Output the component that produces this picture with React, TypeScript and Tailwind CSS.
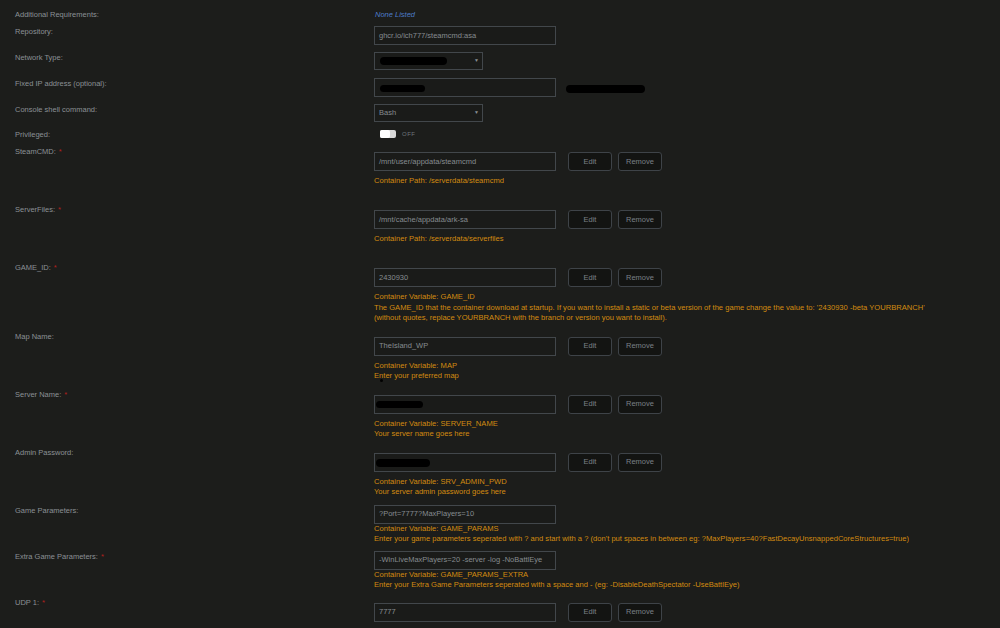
import React from "react";

type Row = {
  label: string;
  required?: boolean;
  value: React.ReactNode;
  buttons?: boolean;
  lines?: string[];
};

const font = { fontFamily: '"Liberation Sans", Arial, sans-serif' };

function Blob({ className }: { className: string }) {
  return <span className={`inline-block rounded-full bg-black ${className}`} />;
}

function TextInput({ children }: { children: React.ReactNode }) {
  return (
    <div className="flex h-[19px] w-[182px] shrink-0 items-center border border-[#42474b] bg-[#1a1b19] px-[4px] text-[7.5px] text-[#868b90]">
      {children}
    </div>
  );
}

function Select({ children }: { children: React.ReactNode }) {
  return (
    <div className="flex h-[18px] w-[109px] items-center justify-between border border-[#42474b] bg-[#1a1b19] pl-[4px] pr-[3px] text-[7.5px] text-[#868b90]">
      <span className="flex items-center">{children}</span>
      <span className="text-[5px] text-[#8a9096]">▼</span>
    </div>
  );
}

function Btn({ children }: { children: string }) {
  return (
    <button className="flex h-[19px] w-[44px] items-center justify-center rounded-[3px] border border-[#3e4348] bg-[#131412] text-[7.5px] text-[#7a8086]">
      {children}
    </button>
  );
}

const rows: Row[] = [
  {
    label: "SteamCMD:",
    required: true,
    value: "/mnt/user/appdata/steamcmd",
    buttons: true,
    lines: ["Container Path: /serverdata/steamcmd", "\u00a0"],
  },
  {
    label: "ServerFiles:",
    required: true,
    value: "/mnt/cache/appdata/ark-sa",
    buttons: true,
    lines: ["Container Path: /serverdata/serverfiles", "\u00a0"],
  },
  {
    label: "GAME_ID:",
    required: true,
    value: "2430930",
    buttons: true,
    lines: [
      "Container Variable: GAME_ID",
      "The GAME_ID that the container download at startup. If you want to install a static or beta version of the game change the value to: '2430930 -beta YOURBRANCH'",
      "(without quotes, replace YOURBRANCH with the branch or version you want to install).",
    ],
  },
  {
    label: "Map Name:",
    value: "TheIsland_WP",
    buttons: true,
    lines: ["Container Variable: MAP", "Enter your preferred map"],
  },
  {
    label: "Server Name:",
    required: true,
    value: <Blob className="-ml-[3px] h-[7px] w-[47px]" />,
    buttons: true,
    lines: ["Container Variable: SERVER_NAME", "Your server name goes here"],
  },
  {
    label: "Admin Password:",
    value: <Blob className="-ml-[3px] mt-[2px] h-[8px] w-[54px]" />,
    buttons: true,
    lines: ["Container Variable: SRV_ADMIN_PWD", "Your server admin password goes here"],
  },
  {
    label: "Game Parameters:",
    value: "?Port=7777?MaxPlayers=10",
    lines: [
      "Container Variable: GAME_PARAMS",
      "Enter your game parameters seperated with ? and start with a ? (don't put spaces in between eg: ?MaxPlayers=40?FastDecayUnsnappedCoreStructures=true)",
    ],
  },
  {
    label: "Extra Game Parameters:",
    required: true,
    value: "-WinLiveMaxPlayers=20 -server -log -NoBattlEye",
    lines: [
      "Container Variable: GAME_PARAMS_EXTRA",
      "Enter your Extra Game Parameters seperated with a space and - (eg: -DisableDeathSpectator -UseBattlEye)",
    ],
  },
  {
    label: "UDP 1:",
    required: true,
    value: "7777",
    buttons: true,
  },
];

function Label({ text, required }: { text: string; required?: boolean }) {
  return (
    <div className="w-[359px] shrink-0 pl-[15px] text-[7.5px] leading-[11px] text-[#8b9095]">
      {text}
      {required && <span className="ml-[3px] text-[#b3201d]">*</span>}
    </div>
  );
}

export default function App() {
  return (
    <div className="h-[628px] w-[1000px] overflow-hidden bg-[#1c1d1b]" style={font}>
      <div className="pt-[9px]">
        <div className="flex h-[17px]">
          <Label text="Additional Requirements:" />
          <div className="pl-[16px] text-[7.5px] italic leading-[11px] text-[#4c7cc9]">None Listed</div>
        </div>

        <div className="flex h-[26px]">
          <Label text="Repository:" />
          <div className="pl-[15px]">
            <TextInput>ghcr.io/ich777/steamcmd:asa</TextInput>
          </div>
        </div>

        <div className="flex h-[26px]">
          <Label text="Network Type:" />
          <div className="pl-[15px]">
            <Select>
              <Blob className="ml-[1px] h-[8px] w-[67px]" />
            </Select>
          </div>
        </div>

        <div className="flex h-[26px]">
          <Label text="Fixed IP address (optional):" />
          <div className="flex items-start pl-[15px]">
            <TextInput>
              <Blob className="ml-[1px] mt-[1px] h-[7px] w-[45px]" />
            </TextInput>
            <Blob className="ml-[10px] mt-[7px] h-[8px] w-[79px]" />
          </div>
        </div>

        <div className="flex h-[25px]">
          <Label text="Console shell command:" />
          <div className="pl-[15px]">
            <Select>Bash</Select>
          </div>
        </div>

        <div className="flex h-[17px]">
          <Label text="Privileged:" />
          <div className="flex h-[9px] items-center gap-[6px] pl-[21px] pt-[1px]">
            <div className="flex h-[8px] w-[16px] items-center rounded-[2px] bg-[#d8d8d8]">
              <div className="h-[8px] w-[10px] rounded-[2px] bg-white" />
            </div>
            <span className="text-[6px] tracking-[0.5px] text-[#6f757b]">OFF</span>
          </div>
        </div>

        {rows.map((r) => (
          <div key={r.label} className={`flex ${r.buttons ? "pb-[7px]" : "pb-[6px]"}`}>
            <Label text={r.label} required={r.required} />
            <div className={`pl-[15px] ${r.buttons ? "pt-[6px]" : "pt-0"}`}>
              <div className="flex h-[19px] items-center">
                <TextInput>{r.value}</TextInput>
                {r.buttons && (
                  <div className="ml-[12px] flex gap-[6px]">
                    <Btn>Edit</Btn>
                    <Btn>Remove</Btn>
                  </div>
                )}
              </div>
              {r.lines && (
                <div className={`${r.buttons ? "mt-[5px]" : "mt-0"} text-[7.6px] leading-[10.5px] text-[#d38b10]`}>
                  {r.lines.map((l, i) => (
                    <div key={i} className="relative whitespace-nowrap">
                      {l}
                      {l === "Enter your preferred map" && (
                        <span className="absolute left-[6px] top-[8px] h-[3px] w-[3px] rounded-full bg-black" />
                      )}
                    </div>
                  ))}
                </div>
              )}
            </div>
          </div>
        ))}
      </div>
    </div>
  );
}
